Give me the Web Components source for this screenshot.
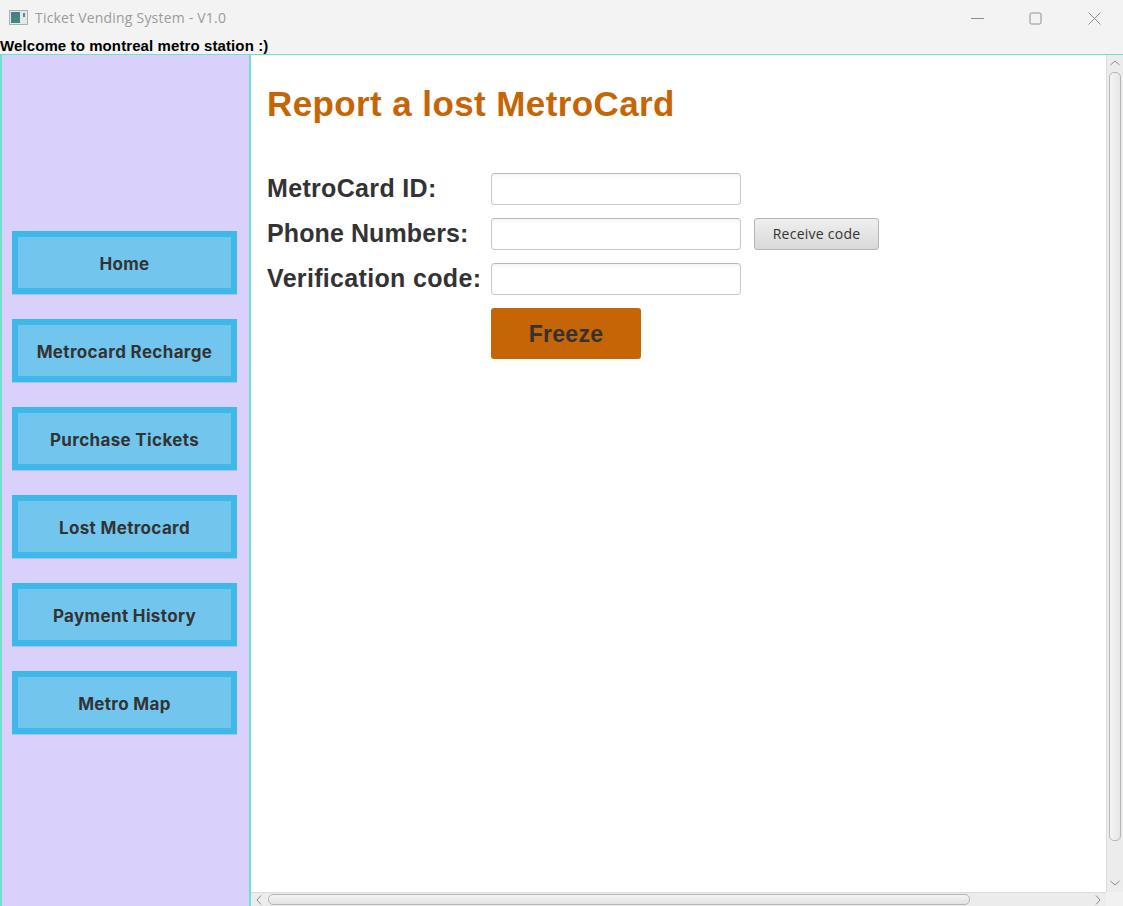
<!DOCTYPE html>
<html>
<head>
<meta charset="utf-8">
<style>
    html, body { margin: 0; padding: 0; height: 100%; overflow: hidden; }
    body { font-family: "Liberation Sans", Arial, sans-serif; }
    app-window { height: 906px; }
</style>
</head>
<body>
<app-window>
    <title-bar slot="top">Ticket Vending System - V1.0</title-bar>
    <side-nav slot="nav">
        <nav-button>Home</nav-button>
        <nav-button>Metrocard Recharge</nav-button>
        <nav-button>Purchase Tickets</nav-button>
        <nav-button>Lost Metrocard</nav-button>
        <nav-button>Payment History</nav-button>
        <nav-button>Metro Map</nav-button>
    </side-nav>
    <scroll-pane slot="main">
        <lost-card-form></lost-card-form>
    </scroll-pane>
</app-window>

<script>
class AppWindow extends HTMLElement {
    connectedCallback() {
        this.attachShadow({ mode: 'open' });
        this.shadowRoot.innerHTML = `
            <style>
                :host { display: flex; flex-direction: column; width: 1123px; background: #f3f3f3; }
                .welcome {
                    height: 17px;
                    font: bold 15px/17px "Liberation Sans", sans-serif;
                    letter-spacing: 0.1px;
                    color: #000;
                    background: #f3f3f3;
                    white-space: nowrap;
                }
                .body {
                    flex: 1;
                    min-height: 0;
                    display: flex;
                    border-top: 1px solid #6fe0cc;
                }
            </style>
            <slot name="top"></slot>
            <div class="welcome">Welcome to montreal metro station :)</div>
            <div class="body">
                <slot name="nav"></slot>
                <slot name="main"></slot>
            </div>
        `;
    }
}

class TitleBar extends HTMLElement {
    connectedCallback() {
        this.attachShadow({ mode: 'open' });
        this.shadowRoot.innerHTML = `
            <style>
                :host {
                    display: flex;
                    align-items: center;
                    height: 37px;
                    background: #f3f3f3;
                    color: #9b9b9b;
                    font: 14px "Segoe UI", "Open Sans", sans-serif;
                }
                .icon { margin: 0 7px 3px 9px; display: block; }
                .text { flex: 1; margin-bottom: 3px; letter-spacing: 0.2px; }
                .ctl { width: 59px; height: 34px; display: flex; align-items: center; justify-content: center; }
                svg { display: block; }
            </style>
            <svg class="icon" width="19" height="15" viewBox="0 0 19 15">
                <rect x="0.5" y="0.5" width="18" height="14" fill="#e4e8e8" stroke="#a9b0b2"/>
                <rect x="2" y="2" width="9" height="11" fill="#3f8a80"/>
                <rect x="2" y="2" width="9" height="5" fill="#54798c"/>
                <rect x="14" y="3" width="2" height="4" fill="#4d8f8a"/>
            </svg>
            <span class="text"><slot></slot></span>
            <div class="ctl" style="margin-right:-1px"><svg width="13" height="13" viewBox="0 0 13 13"><path d="M0 6.5H13" stroke="#8e8e8e" fill="none"/></svg></div>
            <div class="ctl"><svg width="13" height="13" viewBox="0 0 13 13"><rect x="1" y="1" width="11" height="11" rx="1.5" stroke="#8e8e8e" fill="none"/></svg></div>
            <div class="ctl" style="margin-right:-1px"><svg width="13" height="13" viewBox="0 0 13 13"><path d="M0.5 0.5L12.5 12.5M12.5 0.5L0.5 12.5" stroke="#8e8e8e" fill="none"/></svg></div>
        `;
    }
}

class SideNav extends HTMLElement {
    connectedCallback() {
        this.attachShadow({ mode: 'open' });
        this.shadowRoot.innerHTML = `
            <style>
                :host {
                    display: flex;
                    flex-direction: column;
                    gap: 25px;
                    box-sizing: border-box;
                    width: 251px;
                    height: 100%;
                    padding: 176px 0 0 10px;
                    background: #d9d1fb;
                    border-left: 2px solid #6fe0cc;
                    border-right: 2px solid #6fe0cc;
                }
            </style>
            <slot></slot>
        `;
    }
}

class NavButton extends HTMLElement {
    connectedCallback() {
        this.attachShadow({ mode: 'open' });
        this.shadowRoot.innerHTML = `
            <style>
                :host {
                    display: flex;
                    align-items: center;
                    justify-content: center;
                    box-sizing: border-box;
                    width: 225px;
                    height: 63px;
                    padding-top: 2px;
                    background: #72c6ee;
                    border: 6px solid #3cb8ea;
                    box-shadow: 0 1px 0 #a9c0f5;
                    color: #333;
                    font: 700 17px Inter, "Liberation Sans", sans-serif;
                    letter-spacing: 0.35px;
                }
            </style>
            <slot></slot>
        `;
    }
}

class ScrollPane extends HTMLElement {
    connectedCallback() {
        this.attachShadow({ mode: 'open' });
        this.shadowRoot.innerHTML = `
            <style>
                :host {
                    display: grid;
                    grid-template-columns: 855px 17px;
                    grid-template-rows: 837px 14px;
                    width: 872px;
                    background: #fff;
                }
                .view { overflow: hidden; background: #fff; }
                .vbar, .hbar { background: #ececec; position: relative; }
                .vbar { border-left: 1px solid #dcdcdc; }
                .hbar { border-top: 1px solid #dcdcdc; }
                .corner { background: #f1f1f1; }
                .thumb {
                    position: absolute;
                    box-sizing: border-box;
                    background: linear-gradient(#f4f4f4, #e2e2e2);
                    border: 1px solid #b5b5b5;
                    border-radius: 5px;
                }
                .vbar .thumb { left: 2px; top: 17px; width: 12px; height: 769px; background: linear-gradient(90deg, #f4f4f4, #e6e6e6); }
                .hbar .thumb { left: 17px; top: 1px; width: 702px; height: 11px; }
                svg { position: absolute; display: block; }
            </style>
            <div class="view"><slot></slot></div>
            <div class="vbar">
                <svg style="left:3px;top:5px" width="10" height="6" viewBox="0 0 10 6"><path d="M0.5 5L5 1L9.5 5" stroke="#8a8a8a" fill="none"/></svg>
                <div class="thumb"></div>
                <svg style="left:3px;bottom:6px" width="10" height="6" viewBox="0 0 10 6"><path d="M0.5 1L5 5L9.5 1" stroke="#8a8a8a" fill="none"/></svg>
            </div>
            <div class="hbar">
                <svg style="left:5px;top:2px" width="6" height="10" viewBox="0 0 6 10"><path d="M5 0.5L1 5L5 9.5" stroke="#8a8a8a" fill="none"/></svg>
                <div class="thumb"></div>
                <svg style="right:5px;top:2px" width="6" height="10" viewBox="0 0 6 10"><path d="M1 0.5L5 5L1 9.5" stroke="#8a8a8a" fill="none"/></svg>
            </div>
            <div class="corner"></div>
        `;
    }
}

class LostCardForm extends HTMLElement {
    connectedCallback() {
        this.attachShadow({ mode: 'open' });
        this.shadowRoot.innerHTML = `
            <style>
                :host { display: block; padding: 28px 0 0 16px; }
                h1 {
                    margin: 0 0 48px;
                    font: bold 35px/42px "Liberation Sans", sans-serif;
                    letter-spacing: 0.4px;
                    color: #c66505;
                    white-space: nowrap;
                }
                .grid {
                    display: grid;
                    grid-template-columns: 224px 250px auto;
                    grid-template-rows: 32px 32px 32px 51px;
                    row-gap: 13px;
                    align-items: center;
                    justify-items: start;
                }
                label {
                    margin-bottom: 2px;
                    font: bold 25px "Liberation Sans", sans-serif;
                    letter-spacing: 0.33px;
                    color: #333;
                    white-space: nowrap;
                }
                label.tight { letter-spacing: 0.1px; }
                .field {
                    box-sizing: border-box;
                    width: 250px;
                    height: 32px;
                    background: linear-gradient(#f6f6f6, #fff 5px);
                    border: 1px solid #c8c8c8;
                    border-top-color: #b9b9b9;
                    border-radius: 4px;
                }
                .code {
                    box-sizing: border-box;
                    margin-left: 13px;
                    width: 125px;
                    height: 32px;
                    padding-bottom: 2px;
                    display: flex;
                    align-items: center;
                    justify-content: center;
                    background: linear-gradient(#efefef, #d9d9d9);
                    border: 1px solid #b4b4b4;
                    border-radius: 3px;
                    color: #333;
                    font: 14px "Segoe UI", "Open Sans", sans-serif;
                    letter-spacing: 0.25px;
                }
                .freeze {
                    grid-column: 2;
                    box-sizing: border-box;
                    width: 150px;
                    height: 51px;
                    padding-top: 2px;
                    display: flex;
                    align-items: center;
                    justify-content: center;
                    background: #c66505;
                    border-radius: 3px;
                    color: #333;
                    font: bold 23px "Liberation Sans", sans-serif;
                    letter-spacing: 0.3px;
                }
            </style>
            <h1>Report a lost MetroCard</h1>
            <div class="grid">
                <label>MetroCard ID:</label><div class="field"></div><span></span>
                <label class="tight">Phone Numbers:</label><div class="field"></div><div class="code">Receive code</div>
                <label>Verification code:</label><div class="field"></div><span></span>
                <div class="freeze">Freeze</div>
            </div>
        `;
    }
}

customElements.define('app-window', AppWindow);
customElements.define('title-bar', TitleBar);
customElements.define('side-nav', SideNav);
customElements.define('nav-button', NavButton);
customElements.define('scroll-pane', ScrollPane);
customElements.define('lost-card-form', LostCardForm);
</script>
</body>
</html>
